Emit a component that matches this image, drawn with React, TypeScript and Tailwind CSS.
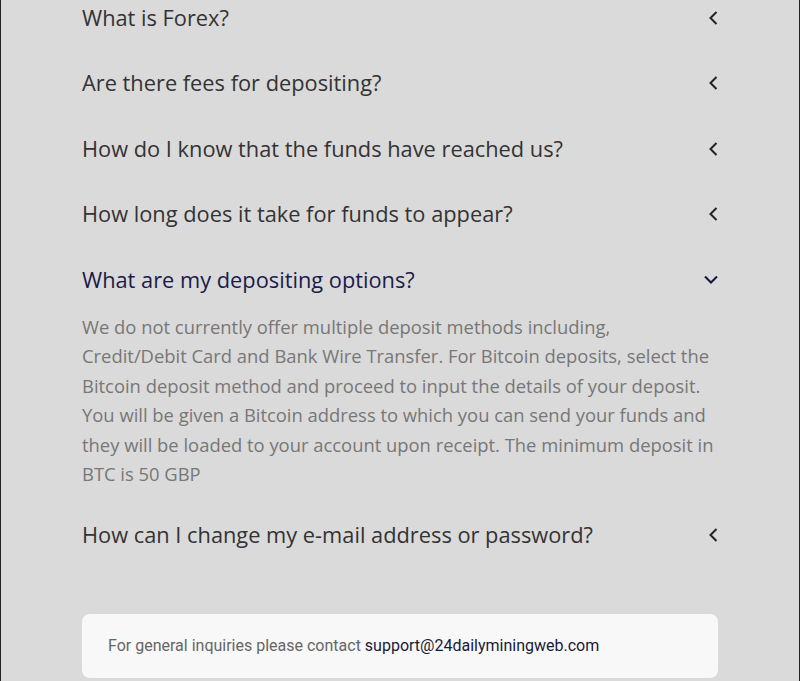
import React from "react";

const Left = () => (
  <svg width="10" height="14" viewBox="0 0 10 14" fill="none">
    <path d="M8.5 1 L2.5 7 L8.5 13" stroke="#222" strokeWidth="2" />
  </svg>
);
const Down = () => (
  <svg width="14" height="10" viewBox="0 0 14 10" fill="none">
    <path d="M1 1.5 L7 7.5 L13 1.5" stroke="#14143c" strokeWidth="2" />
  </svg>
);

const Q = ({ text, open }: { text: string; open?: boolean }) => (
  <div className="flex items-center justify-between py-[18.75px]">
    <span className={`text-[21.8px] leading-[28px] ${open ? "text-[#1b1b4b]" : "text-[#333333]"}`}>{text}</span>
    <span className="flex w-[14px] justify-end">{open ? <Down /> : <Left />}</span>
  </div>
);

export default function App() {
  return (
    <div className="h-[681px] overflow-hidden bg-[#dadada] border-x border-[#222]" style={{ fontFamily: "'Open Sans', sans-serif" }}>
      <div className="mx-auto w-[636px] -mt-[15px]">
        <Q text="What is Forex?" />
        <Q text="Are there fees for depositing?" />
        <Q text="How do I know that the funds have reached us?" />
        <Q text="How long does it take for funds to appear?" />
        <Q text="What are my depositing options?" open />
        <p className="text-[18.4px] leading-[29.5px] text-[#777777] -mt-[1px] mb-[14px]">
          We do not currently offer multiple deposit methods including,<br />
          Credit/Debit Card and Bank Wire Transfer. For Bitcoin deposits, select the<br />
          Bitcoin deposit method and proceed to input the details of your deposit.<br />
          You will be given a Bitcoin address to which you can send your funds and<br />
          they will be loaded to your account upon receipt. The minimum deposit in<br />
          BTC is 50 GBP
        </p>
        <Q text="How can I change my e-mail address or password?" />
        <div className="mt-[46px] rounded-lg bg-[#f8f8f8] h-[64px] flex items-center px-[26px] text-[16px]" style={{ fontFamily: "Roboto, sans-serif" }}>
          <span className="text-[#666666]">For general inquiries please contact&nbsp;</span>
          <span className="text-[#1a1a3a]">support@24dailyminingweb.com</span>
        </div>
      </div>
    </div>
  );
}
